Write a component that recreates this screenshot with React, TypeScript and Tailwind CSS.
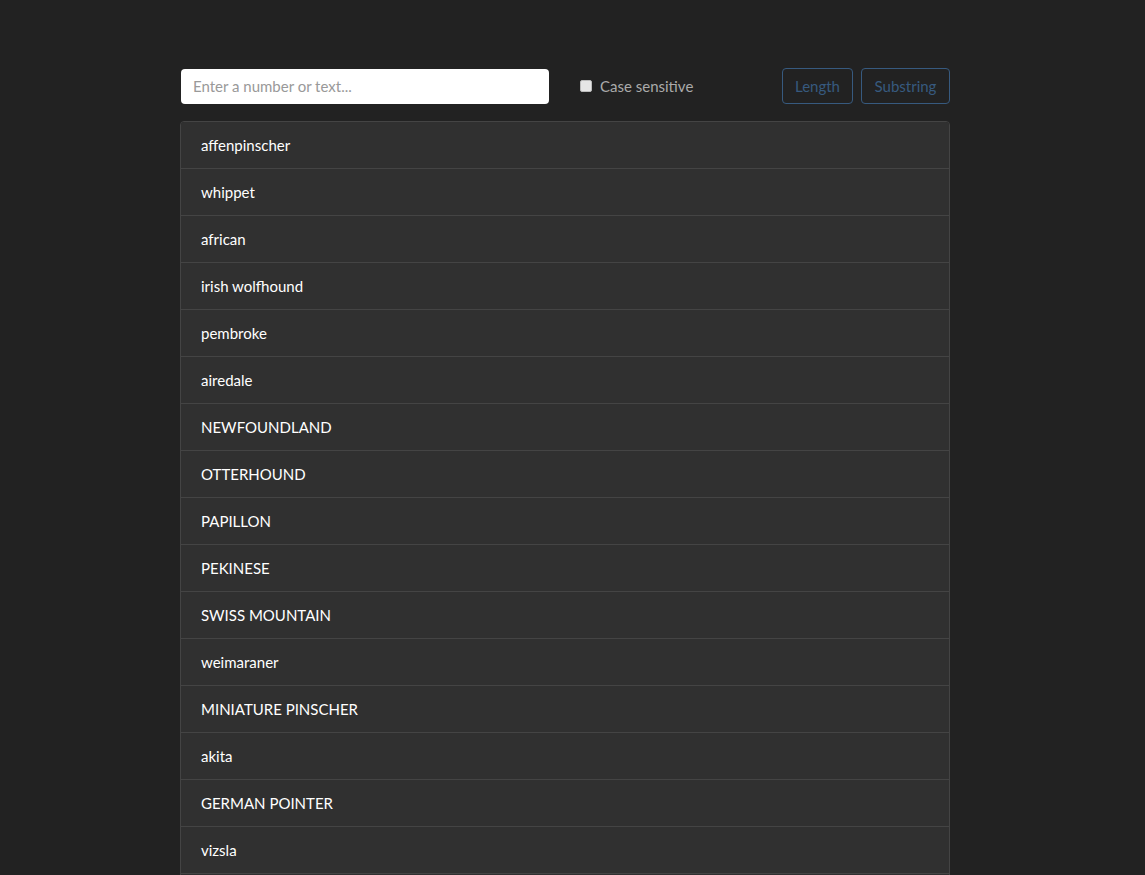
import React from "react";

const items = [
  "affenpinscher",
  "whippet",
  "african",
  "irish wolfhound",
  "pembroke",
  "airedale",
  "NEWFOUNDLAND",
  "OTTERHOUND",
  "PAPILLON",
  "PEKINESE",
  "SWISS MOUNTAIN",
  "weimaraner",
  "MINIATURE PINSCHER",
  "akita",
  "GERMAN POINTER",
  "vizsla",
  "basenji",
  "beagle",
];

export default function App() {
  return (
    <div
      className="min-h-[875px] bg-[#222222] text-white"
      style={{ fontFamily: "Lato, 'Noto Sans', sans-serif" }}
    >
      <div className="pl-[180px] pt-[68px]">
        <div className="w-[770px]">
          <div className="flex items-start h-[36px]">
            <input
              className="w-[368px] h-[35px] ml-[1px] mt-[1px] rounded-[4px] bg-white px-[12px] pb-[1px] text-[15px] text-[#444] placeholder:text-[#999] outline-none"
              placeholder="Enter a number or text..."
            />
            <label className="flex items-center h-[36px] ml-[31px] text-[15px] text-[#aaaaaa]">
              <span className="w-[12px] h-[12px] bg-[#e6e6e6] border border-[#bbb] rounded-[2px] mr-[8px]" />
              Case sensitive
            </label>
            <div className="ml-auto flex gap-[8px]">
              <button className="h-[36px] w-[71px] rounded-[4px] border border-[#375a7f] text-[#375a7f] text-[15px]">
                Length
              </button>
              <button className="h-[36px] w-[89px] rounded-[4px] border border-[#375a7f] text-[#375a7f] text-[15px]">
                Substring
              </button>
            </div>
          </div>
          <ul className="mt-[17px] rounded-[4px] border border-[#444] overflow-hidden">
            {items.map((it, i) => (
              <li
                key={i}
                className={`flex items-center pl-[20px] bg-[#303030] text-[15px] text-white ${
                  i > 0 ? "h-[47px] border-t border-[#444]" : "h-[46px]"
                }`}
              >
                {it}
              </li>
            ))}
          </ul>
        </div>
      </div>
    </div>
  );
}
